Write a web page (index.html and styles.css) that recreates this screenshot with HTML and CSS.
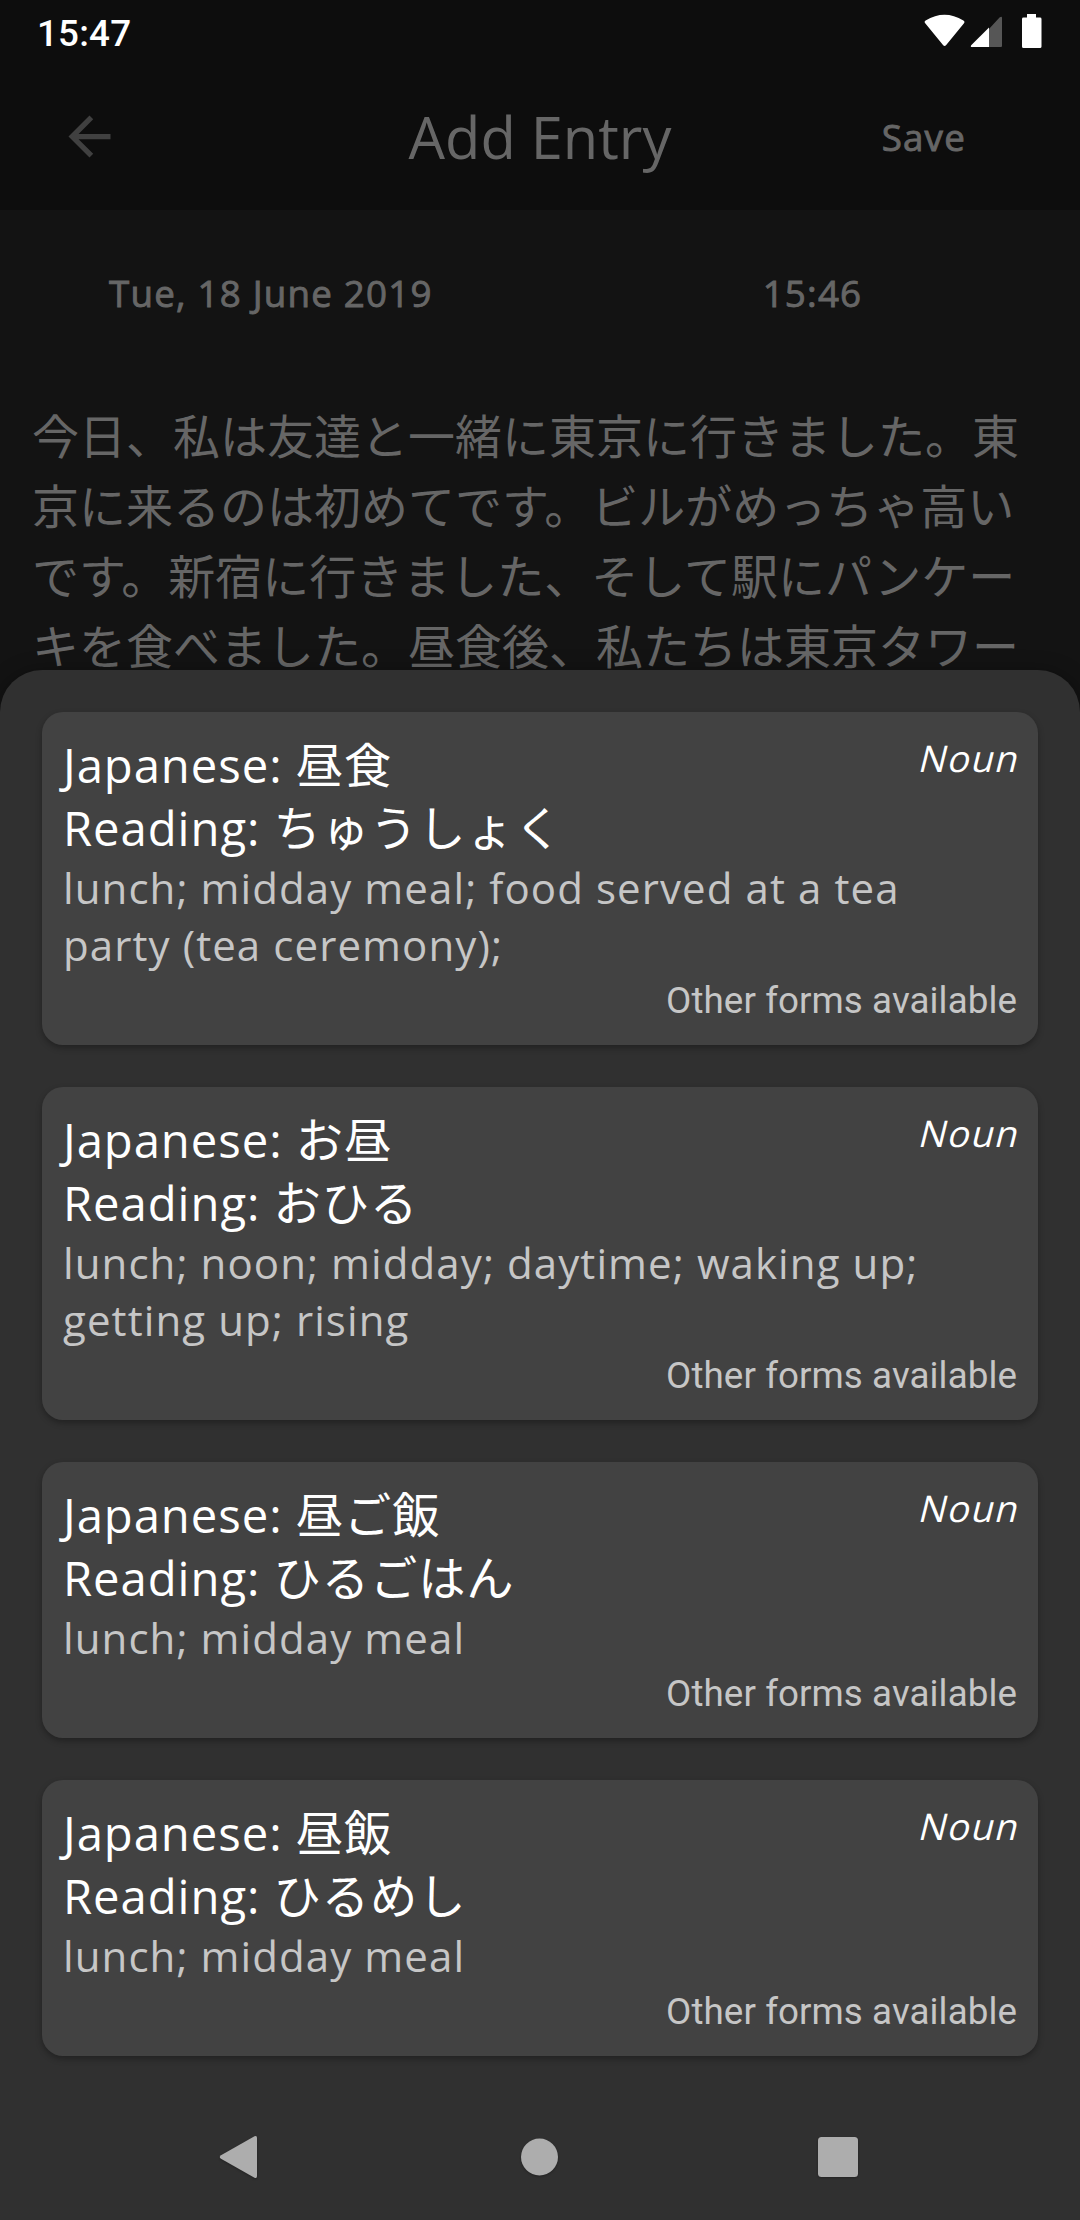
FILE: index.html
```html
<!DOCTYPE html>
<html lang="ja">
<head>
<meta charset="utf-8">
<title>Add Entry</title>
<link rel="stylesheet" href="styles.css">
</head>
<body>
<div class="screen">
  <div class="status-bar">
    <span class="clock">15:47</span>
    <svg class="status-icons" width="120" height="36" viewBox="0 0 120 36">
      <path fill="#fff" d="M3.2 9.2Q1.8 7.8 3.6 6.6Q22.500-5.200 41.400 6.600Q43.200 7.800 42 9.200L24 31.200Q22.600 32.800 21.200 31.200Z"/>
      <path fill="#565656" d="M50 33.500L77.500 3.600Q80 1.500 80 4V32Q80 33 79 33H50Z"/>
      <path fill="#fff" d="M67 13.400V33H50Q48 33 49.200 31.200Z"/>
      <path fill="#fff" d="M105 0H114V3.600H118Q119.500 3.600 119.500 5V32.500Q119.500 34 118 34H101.500Q100 34 100 32.500V5Q100 3.600 101.500 3.600H105Z"/>
    </svg>
  </div>
  <header class="app-bar">
    <svg class="back" width="63" height="63" viewBox="0 0 24 24"><path d="M20 11H7.830l5.590-5.590L12 4l-8 8 8 8 1.410-1.410L7.830 13H20v-2z"/></svg>
    <h1 class="title">Add Entry</h1>
    <span class="save">Save</span>
  </header>
  <main class="entry">
    <div class="entry-meta">
      <span class="entry-date">Tue, 18 June 2019</span>
      <span class="entry-time">15:46</span>
    </div>
    <p class="entry-text">今日、私は友達と一緒に東京に行きました。東京に来るのは初めてです。ビルがめっちゃ高いです。新宿に行きました、そして駅にパンケーキを食べました。昼食後、私たちは東京タワー</p>
  </main>
  <section class="sheet">
    <article class="card">
      <div class="card-head">
        <div class="word"><p>Japanese: 昼食</p><p>Reading: ちゅうしょく</p></div>
        <span class="kind">Noun</span>
      </div>
      <p class="meaning">lunch; midday meal; food served at a tea party (tea ceremony);</p>
      <p class="more">Other forms available</p>
    </article>
    <article class="card">
      <div class="card-head">
        <div class="word"><p>Japanese: お昼</p><p>Reading: おひる</p></div>
        <span class="kind">Noun</span>
      </div>
      <p class="meaning">lunch; noon; midday; daytime; waking up; getting up; rising</p>
      <p class="more">Other forms available</p>
    </article>
    <article class="card">
      <div class="card-head">
        <div class="word"><p>Japanese: 昼ご飯</p><p>Reading: ひるごはん</p></div>
        <span class="kind">Noun</span>
      </div>
      <p class="meaning">lunch; midday meal</p>
      <p class="more">Other forms available</p>
    </article>
    <article class="card">
      <div class="card-head">
        <div class="word"><p>Japanese: 昼飯</p><p>Reading: ひるめし</p></div>
        <span class="kind">Noun</span>
      </div>
      <p class="meaning">lunch; midday meal</p>
      <p class="more">Other forms available</p>
    </article>
    <nav class="nav-bar">
      <svg width="44" height="44" viewBox="0 0 44 44"><path d="M5 20.200L38.500 1.300Q41 .2 41 3V41Q41 43.800 38.500 42.700L5 23.800Q2.500 22 5 20.200Z"/></svg>
      <svg width="44" height="44" viewBox="0 0 44 44"><circle cx="23.500" cy="22" r="18.500"/></svg>
      <svg width="44" height="44" viewBox="0 0 44 44"><rect x="2" y="2" width="40" height="40" rx="3.500"/></svg>
    </nav>
  </section>
</div>
</body>
</html>
```
FILE: styles.css
```css
* { box-sizing: border-box; margin: 0; padding: 0; }

body {
  background: #131313;
  font-family: "Open Sans", "Noto Sans CJK JP", sans-serif;
  color: #fff;
}

.screen {
  position: relative;
  width: 1080px;
  height: 2220px;
  overflow: hidden;
  background: #131313;
}

.status-bar {
  display: flex;
  justify-content: space-between;
  height: 63px;
  padding: 14px 38px 0 37px;
  background: #0d0d0d;
}

.clock {
  font: 500 36.75px/40px Roboto, sans-serif;
  letter-spacing: .2px;
}

.app-bar {
  display: grid;
  grid-template-columns: 1fr auto 1fr;
  align-items: center;
  height: 147px;
  padding: 0 58px;
  background: #0d0d0d;
  color: #666;
}

.back { fill: #404040; }

.title {
  font-size: 57.75px;
  font-weight: 400;
  line-height: 78px;
  white-space: nowrap;
}

.save {
  justify-self: end;
  margin-right: 56px;
  font-size: 36.75px;
  letter-spacing: 1.2px;
  -webkit-text-stroke: .9px;
}

.entry { color: #666; }

.entry-meta {
  display: flex;
  gap: 330px;
  padding: 58px 0 0 109px;
  font-size: 36.75px;
  line-height: 50px;
  letter-spacing: 1.2px;
  white-space: nowrap;
  -webkit-text-stroke: .9px;
}

.entry-text {
  padding: 83px 32px 0;
  font-size: 47px;
  line-height: 70px;
  line-break: anywhere;
}

.sheet {
  position: absolute;
  inset: 670px 0 0;
  display: flex;
  flex-direction: column;
  gap: 42px;
  padding: 42px 42px 0;
  border-radius: 42px 42px 0 0;
  background: #303030;
  box-shadow: 0 4px 22px rgba(0, 0, 0, .4);
}

.card {
  padding: 21px;
  border-radius: 21px;
  background: #424242;
  box-shadow: 0 3px 6px rgba(0, 0, 0, .3);
}

.card-head {
  display: flex;
  justify-content: space-between;
}

.word {
  font-size: 47.25px;
  line-height: 63px;
  letter-spacing: .94px;
}

.kind {
  height: 50px;
  font-size: 36.75px;
  line-height: 50px;
  letter-spacing: 1.31px;
  transform: skewX(-14deg);
  transform-origin: 50% 39px;
}

.meaning {
  font-size: 42px;
  line-height: 57px;
  letter-spacing: 1.09px;
  color: #c6c6c6;
}

.more {
  margin-bottom: -5px;
  font: 400 36.75px/56px Roboto, sans-serif;
  letter-spacing: .08px;
  text-align: right;
  color: #c6c6c6;
}

.nav-bar {
  display: flex;
  justify-content: space-between;
  padding: 37px 178px 0 174px;
}

.nav-bar svg {
  fill: #adadad;
  filter: drop-shadow(0 1px 1px rgba(0, 0, 0, .3));
}
```
